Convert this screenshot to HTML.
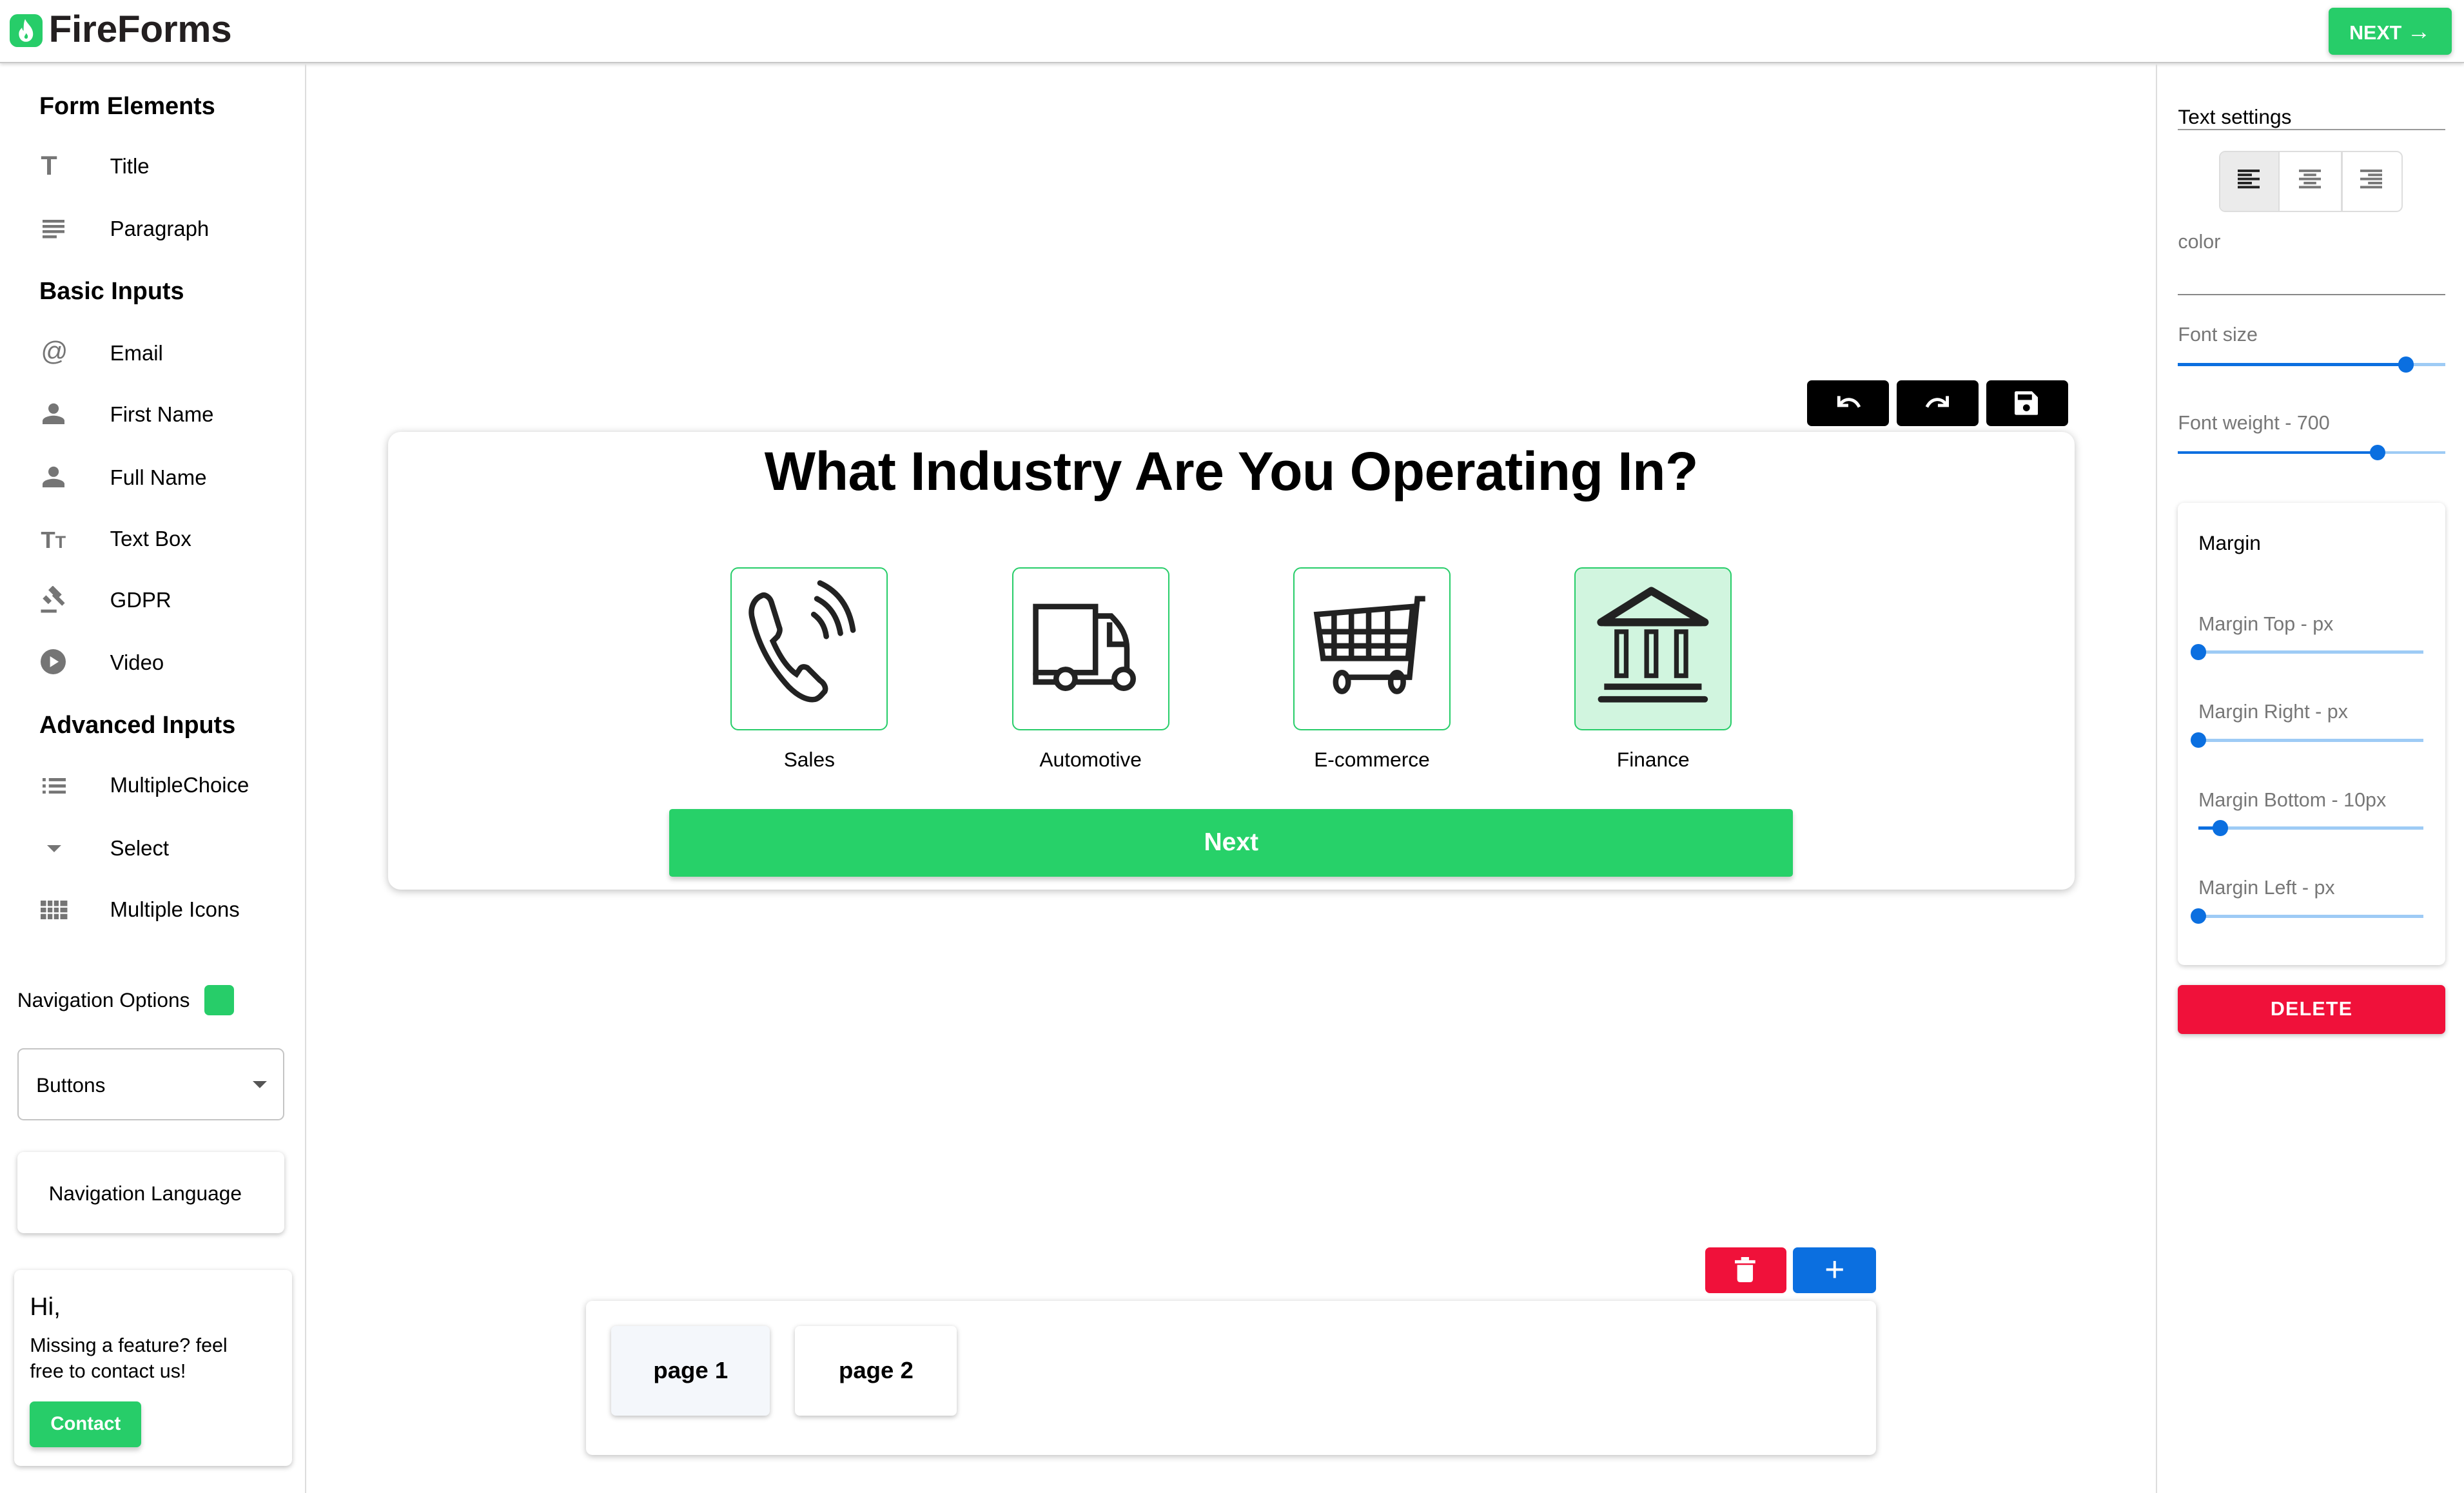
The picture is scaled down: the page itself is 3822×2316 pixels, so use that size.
<!DOCTYPE html>
<html><head><meta charset="utf-8"><style>
*{box-sizing:border-box;margin:0;padding:0}
html,body{width:3822px;height:2316px;overflow:hidden;background:#fff}
#r{zoom:2.4375;width:1568px;height:951px;position:relative;font-family:"Liberation Sans",Arial,sans-serif;color:#000}
.a{position:absolute}
.hdr{left:0;top:0;width:1568px;height:40px;border-bottom:1px solid #c8c8c8;box-shadow:0 1px 2px rgba(0,0,0,.15)}
.side{left:0;top:41px;width:195px;height:910px;border-right:1px solid #ddd}
.h{font-size:15.5px;font-weight:bold;left:25px}
.it{left:70px;font-size:13.5px}
.ic{left:26px;width:17px;height:17px;color:#757575}
.rp{left:1372px;top:41px;width:196px;height:910px;border-left:1px solid #ddd}
.lbl{font-size:12.5px;color:#777}
.sl{height:2px;background:#9ecbf5}
.sl i{position:absolute;left:0;top:0;height:2px;background:#0b6fe0}
.sl b{position:absolute;top:-4px;width:10px;height:10px;border-radius:50%;background:#0b6fe0;margin-left:-5px}
.card{border:1px solid #27cd69;border-radius:5px;width:100px;height:104px}
.cap{font-size:13px;width:140px;text-align:center}
.blk{background:#000;border-radius:3px;width:52px;height:29px;top:242px}
</style></head><body><div id="r">
<div class="a hdr"></div>
<div class="a" style="left:6px;top:9px;width:21px;height:21px;background:#27cd69;border-radius:5px"></div>
<svg class="a" style="left:9px;top:11px" width="15" height="17" viewBox="0 0 15 17"><path d="M7 1C8 4 12 6 12 10.5C12 13.5 10 15.5 7.5 15.5S3 13.5 3 10.5C3 8.5 4 7.5 5 6.5C5 8 6 8.5 6 8.5C6 6 6 3 7 1Z" fill="#fff"/><path d="M7.5 10C8.5 11 9 12 8.5 13S6.5 13.5 6.5 12.5S7.5 11 7.5 10Z" fill="#27cd69"/></svg>
<div class="a" style="left:31px;top:5px;font-size:24px;font-weight:bold;color:#231f20;letter-spacing:-0.1px">FireForms</div>
<div class="a" style="left:1482px;top:5px;width:78px;height:30px;background:#27cd69;border-radius:3px;color:#fff;font-size:12.5px;font-weight:bold;line-height:30px;padding-left:13px;box-shadow:0 1px 3px rgba(0,0,0,.25)">NEXT <span style="font-size:15px">→</span></div>

<div class="a side"></div>
<div class="a h" style="top:59px">Form Elements</div>
<div class="a ic" style="top:97px;font-weight:bold;font-size:17px;line-height:17px">T</div><div class="a it" style="top:98px">Title</div>
<svg class="a" style="left:27px;top:140px" width="14" height="12"><g fill="#757575"><rect y="0" width="14" height="1.8"/><rect y="3.3" width="14" height="1.8"/><rect y="6.6" width="14" height="1.8"/><rect y="9.9" width="9" height="1.8"/></g></svg><div class="a it" style="top:138px">Paragraph</div>
<div class="a h" style="top:177px">Basic Inputs</div>
<div class="a ic" style="top:215px;font-size:17px;line-height:17px">@</div><div class="a it" style="top:217px">Email</div>
<svg class="a" style="left:27px;top:256px" width="14" height="14" viewBox="0 0 14 14"><circle cx="7" cy="4" r="3.3" fill="#757575"/><path d="M0 14V12C0 9.5 4.5 8.5 7 8.5S14 9.5 14 12V14Z" fill="#757575"/></svg><div class="a it" style="top:256px">First Name</div>
<svg class="a" style="left:27px;top:296px" width="14" height="14" viewBox="0 0 14 14"><circle cx="7" cy="4" r="3.3" fill="#757575"/><path d="M0 14V12C0 9.5 4.5 8.5 7 8.5S14 9.5 14 12V14Z" fill="#757575"/></svg><div class="a it" style="top:296px">Full Name</div>
<div class="a ic" style="top:335px;font-weight:bold;font-size:15px;line-height:17px">T<span style="font-size:11px">T</span></div><div class="a it" style="top:335px">Text Box</div>
<svg class="a" style="left:25px;top:373px" width="18" height="18" viewBox="0 0 18 18"><g fill="#757575"><rect x="6" y="2" width="8" height="4" transform="rotate(45 10 4)"/><rect x="1" y="15" width="10" height="2"/><rect x="8" y="7" width="9" height="2.5" transform="rotate(45 12 8)"/><rect x="3" y="7" width="5" height="3" transform="rotate(45 5 8)"/></g></svg><div class="a it" style="top:374px">GDPR</div>
<svg class="a" style="left:26px;top:413px" width="16" height="16"><circle cx="8" cy="8" r="8" fill="#757575"/><path d="M6 4.5L11.5 8L6 11.5Z" fill="#fff"/></svg><div class="a it" style="top:414px">Video</div>
<div class="a h" style="top:453px">Advanced Inputs</div>
<svg class="a" style="left:27px;top:495px" width="15" height="10"><g fill="#757575"><rect width="2" height="2"/><rect y="4" width="2" height="2"/><rect y="8" width="2" height="2"/><rect x="4" width="11" height="2"/><rect x="4" y="4" width="11" height="2"/><rect x="4" y="8" width="11" height="2"/></g></svg><div class="a it" style="top:492px">MultipleChoice</div>
<svg class="a" style="left:30px;top:538px" width="9" height="5"><path d="M0 0H9L4.5 4.5Z" fill="#757575"/></svg><div class="a it" style="top:532px">Select</div>
<svg class="a" style="left:26px;top:573px" width="17" height="12"><g fill="#757575"><rect width="17" height="12"/></g><g fill="#fff"><rect x="3.5" width="1" height="12"/><rect x="7.5" width="1" height="12"/><rect x="11.5" width="1" height="12"/><rect y="3.5" width="17" height="1"/><rect y="7.5" width="17" height="1"/></g></svg><div class="a it" style="top:571px">Multiple Icons</div>
<div class="a" style="left:11px;top:629px;font-size:13px">Navigation Options</div>
<div class="a" style="left:130px;top:627px;width:19px;height:19px;background:#27cd69;border-radius:3px"></div>
<div class="a" style="left:11px;top:667px;width:170px;height:46px;border:1px solid #c4c4c4;border-radius:4px"></div>
<div class="a" style="left:23px;top:683px;font-size:13px">Buttons</div>
<svg class="a" style="left:161px;top:688px" width="9" height="5"><path d="M0 0H9L4.5 4.5Z" fill="#555"/></svg>
<div class="a" style="left:11px;top:733px;width:170px;height:52px;border-radius:4px;box-shadow:0 1px 3px rgba(0,0,0,.25)"></div>
<div class="a" style="left:31px;top:752px;font-size:13px">Navigation Language</div>
<div class="a" style="left:9px;top:808px;width:177px;height:125px;border-radius:4px;box-shadow:0 1px 3px rgba(0,0,0,.25)"></div>
<div class="a" style="left:19px;top:823px;font-size:16px">Hi,</div>
<div class="a" style="left:19px;top:848px;font-size:12.5px;line-height:16.5px">Missing a feature? feel<br>free to contact us!</div>
<div class="a" style="left:19px;top:892px;width:71px;height:29px;background:#27cd69;border-radius:3px;color:#fff;font-size:12px;font-weight:bold;text-align:center;line-height:29px;box-shadow:0 2px 3px rgba(0,0,0,.2)">Contact</div>

<div class="a blk" style="left:1150px"></div><div class="a blk" style="left:1207px"></div><div class="a blk" style="left:1264px"></div>
<svg class="a" style="left:1167px;top:249px" width="18" height="14" viewBox="0 0 18 14"><path d="M3 3V9H9" fill="none" stroke="#fff" stroke-width="2"/><path d="M4 8C7 4 13 4 16 10" fill="none" stroke="#fff" stroke-width="2"/></svg>
<svg class="a" style="left:1224px;top:249px" width="18" height="14" viewBox="0 0 18 14"><path d="M15 3V9H9" fill="none" stroke="#fff" stroke-width="2"/><path d="M14 8C11 4 5 4 2 10" fill="none" stroke="#fff" stroke-width="2"/></svg>
<svg class="a" style="left:1282px;top:249px" width="15" height="15" viewBox="0 0 15 15"><path d="M0 1Q0 0 1 0H11L15 4V14Q15 15 14 15H1Q0 15 0 14Z" fill="#fff"/><rect x="2" y="2" width="9" height="3.5" fill="#000"/><circle cx="7.5" cy="10.5" r="2.2" fill="#000"/></svg>

<div class="a" style="left:247px;top:275px;width:1073px;height:291px;border-radius:8px;box-shadow:0 1px 5px rgba(0,0,0,.25)"></div>
<div class="a" style="left:247px;top:280px;width:1073px;text-align:center;font-size:34.5px;font-weight:bold;letter-spacing:-0.2px">What Industry Are You Operating In?</div>
<div class="a card" style="left:465px;top:361px"></div>
<div class="a card" style="left:644px;top:361px"></div>
<div class="a card" style="left:823px;top:361px"></div>
<div class="a card" style="left:1002px;top:361px;background:#d1f5df"></div>
<svg class="a" style="left:465px;top:361px" width="100" height="104" viewBox="0 0 100 104"><g fill="none" stroke="#222" stroke-width="3.5" stroke-linecap="round"><path d="M20 18C15 20 12 26 14 33C18 50 26 64 37 76C43 82 49 85 54 84C57 83 58 81 60 79C61 77 60 74 57 72L49 64C47 63 45 63 44 65L42 68C36 64 31 56 27 47L30 44C31 42 32 40 31 38L26 22C25 19 22 17 20 18Z"/><path d="M57 10C70 16 76 27 78 40"/><path d="M55 20C63 24 68 31 70 42"/><path d="M53 30C57 33 60 37 61 44"/></g></svg>
<svg class="a" style="left:644px;top:361px" width="100" height="104" viewBox="0 0 100 104"><g fill="none" stroke="#222" stroke-width="3.5"><rect x="15" y="25" width="38" height="42"/><path d="M53 31H63C70 38 73 44 73 52V73H15V67"/><path d="M62 35V49H73"/></g><circle cx="34" cy="71" r="6" fill="#fff" stroke="#222" stroke-width="3.5"/><circle cx="75" cy="71" r="6" fill="#fff" stroke="#222" stroke-width="3.5" transform="translate(-4 0)"/></svg>
<svg class="a" style="left:823px;top:361px" width="100" height="104" viewBox="0 0 100 104"><g fill="none" stroke="#222" stroke-width="3.5"><path d="M84 20H79L74 70H35"/><path d="M15 30L76 25L73 58H19Z"/><path d="M26 29V58M37 28V58M48 27V58M60 26V58M16 41H75M17 50H74"/><ellipse cx="31" cy="73" rx="4" ry="6"/><ellipse cx="66" cy="73" rx="4" ry="6"/></g></svg>
<svg class="a" style="left:1002px;top:361px" width="100" height="104" viewBox="0 0 100 104"><g stroke="#222" fill="none"><path d="M49 15L17 35H83Z" stroke-width="5" stroke-linejoin="round"/><path d="M19 35H81" stroke-width="5"/><rect x="27" y="41" width="6" height="28" stroke-width="3"/><rect x="46" y="41" width="6" height="28" stroke-width="3"/><rect x="65" y="41" width="6" height="28" stroke-width="3"/><path d="M19 76H81" stroke-width="4"/><path d="M17 84H83" stroke-width="4" stroke-linecap="round"/></g></svg>
<div class="a cap" style="left:445px;top:476px">Sales</div>
<div class="a cap" style="left:624px;top:476px">Automotive</div>
<div class="a cap" style="left:803px;top:476px">E-commerce</div>
<div class="a cap" style="left:982px;top:476px">Finance</div>
<div class="a" style="left:426px;top:515px;width:715px;height:43px;background:#27d169;border-radius:2px;color:#fff;font-size:16px;font-weight:bold;text-align:center;line-height:43px;box-shadow:0 2px 3px rgba(0,0,0,.2)">Next</div>

<div class="a" style="left:1085px;top:794px;width:52px;height:29px;background:#f0113a;border-radius:3px"></div>
<svg class="a" style="left:1104px;top:800px" width="13" height="16" viewBox="0 0 13 16"><rect x="0" y="2" width="13" height="2" fill="#fff"/><rect x="4" y="0" width="5" height="2" fill="#fff"/><path d="M1.5 5H11.5V14Q11.5 16 9.5 16H3.5Q1.5 16 1.5 14Z" fill="#fff"/></svg>
<div class="a" style="left:1141px;top:794px;width:53px;height:29px;background:#0b6fe0;border-radius:3px;color:#fff;font-size:22px;text-align:center;line-height:28px">+</div>
<div class="a" style="left:373px;top:828px;width:821px;height:98px;border-radius:4px;box-shadow:0 1px 4px rgba(0,0,0,.25)"></div>
<div class="a" style="left:389px;top:844px;width:101px;height:57px;background:#f4f7fb;border-radius:3px;box-shadow:0 1px 3px rgba(0,0,0,.25);font-size:15px;font-weight:bold;text-align:center;line-height:57px">page 1</div>
<div class="a" style="left:506px;top:844px;width:103px;height:57px;border-radius:3px;box-shadow:0 1px 3px rgba(0,0,0,.25);font-size:15px;font-weight:bold;text-align:center;line-height:57px">page 2</div>

<div class="a rp"></div>
<div class="a" style="left:1386px;top:67px;font-size:13px">Text settings</div>
<div class="a" style="left:1386px;top:82px;width:170px;height:1px;background:#999"></div>
<div class="a" style="left:1412px;top:96px;width:117px;height:39px;border:1px solid #ddd;border-radius:4px;overflow:hidden"><div style="position:absolute;left:0;top:0;width:38px;height:39px;background:#ebebeb;border-right:1px solid #ddd"></div><div style="position:absolute;left:77px;top:0;width:1px;height:39px;background:#ddd"></div></div>
<svg class="a" style="left:1424px;top:108px" width="14" height="12"><g fill="#222"><rect width="14" height="1.6"/><rect y="2.6" width="9" height="1.6"/><rect y="5.2" width="14" height="1.6"/><rect y="7.8" width="9" height="1.6"/><rect y="10.4" width="14" height="1.6"/></g></svg>
<svg class="a" style="left:1463px;top:108px" width="14" height="12"><g fill="#777"><rect width="14" height="1.6"/><rect x="3" y="2.6" width="8" height="1.6"/><rect y="5.2" width="14" height="1.6"/><rect x="3" y="7.8" width="8" height="1.6"/><rect y="10.4" width="14" height="1.6"/></g></svg>
<svg class="a" style="left:1502px;top:108px" width="14" height="12"><g fill="#777"><rect width="14" height="1.6"/><rect x="5" y="2.6" width="9" height="1.6"/><rect y="5.2" width="14" height="1.6"/><rect x="5" y="7.8" width="9" height="1.6"/><rect y="10.4" width="14" height="1.6"/></g></svg>
<div class="a lbl" style="left:1386px;top:147px">color</div>
<div class="a" style="left:1386px;top:187px;width:170px;height:1px;background:#888"></div>
<div class="a lbl" style="left:1386px;top:206px">Font size</div>
<div class="a sl" style="left:1386px;top:231px;width:170px"><i style="width:145px"></i><b style="left:145px"></b></div>
<div class="a lbl" style="left:1386px;top:262px">Font weight - 700</div>
<div class="a sl" style="left:1386px;top:287px;width:170px"><i style="width:127px"></i><b style="left:127px"></b></div>
<div class="a" style="left:1386px;top:320px;width:170px;height:294px;border-radius:4px;box-shadow:0 1px 3px rgba(0,0,0,.2)"></div>
<div class="a" style="left:1399px;top:338px;font-size:13px">Margin</div>
<div class="a lbl" style="left:1399px;top:390px">Margin Top - px</div>
<div class="a sl" style="left:1399px;top:414px;width:143px"><b style="left:0"></b></div>
<div class="a lbl" style="left:1399px;top:446px">Margin Right - px</div>
<div class="a sl" style="left:1399px;top:470px;width:143px"><b style="left:0"></b></div>
<div class="a lbl" style="left:1399px;top:502px">Margin Bottom - 10px</div>
<div class="a sl" style="left:1399px;top:526px;width:143px"><i style="width:14px"></i><b style="left:14px"></b></div>
<div class="a lbl" style="left:1399px;top:558px">Margin Left - px</div>
<div class="a sl" style="left:1399px;top:582px;width:143px"><b style="left:0"></b></div>
<div class="a" style="left:1386px;top:627px;width:170px;height:31px;background:#f0113a;border-radius:3px;color:#fff;font-size:12.5px;font-weight:bold;text-align:center;line-height:31px;letter-spacing:.5px;box-shadow:0 1px 3px rgba(0,0,0,.25)">DELETE</div>
</div></body></html>
